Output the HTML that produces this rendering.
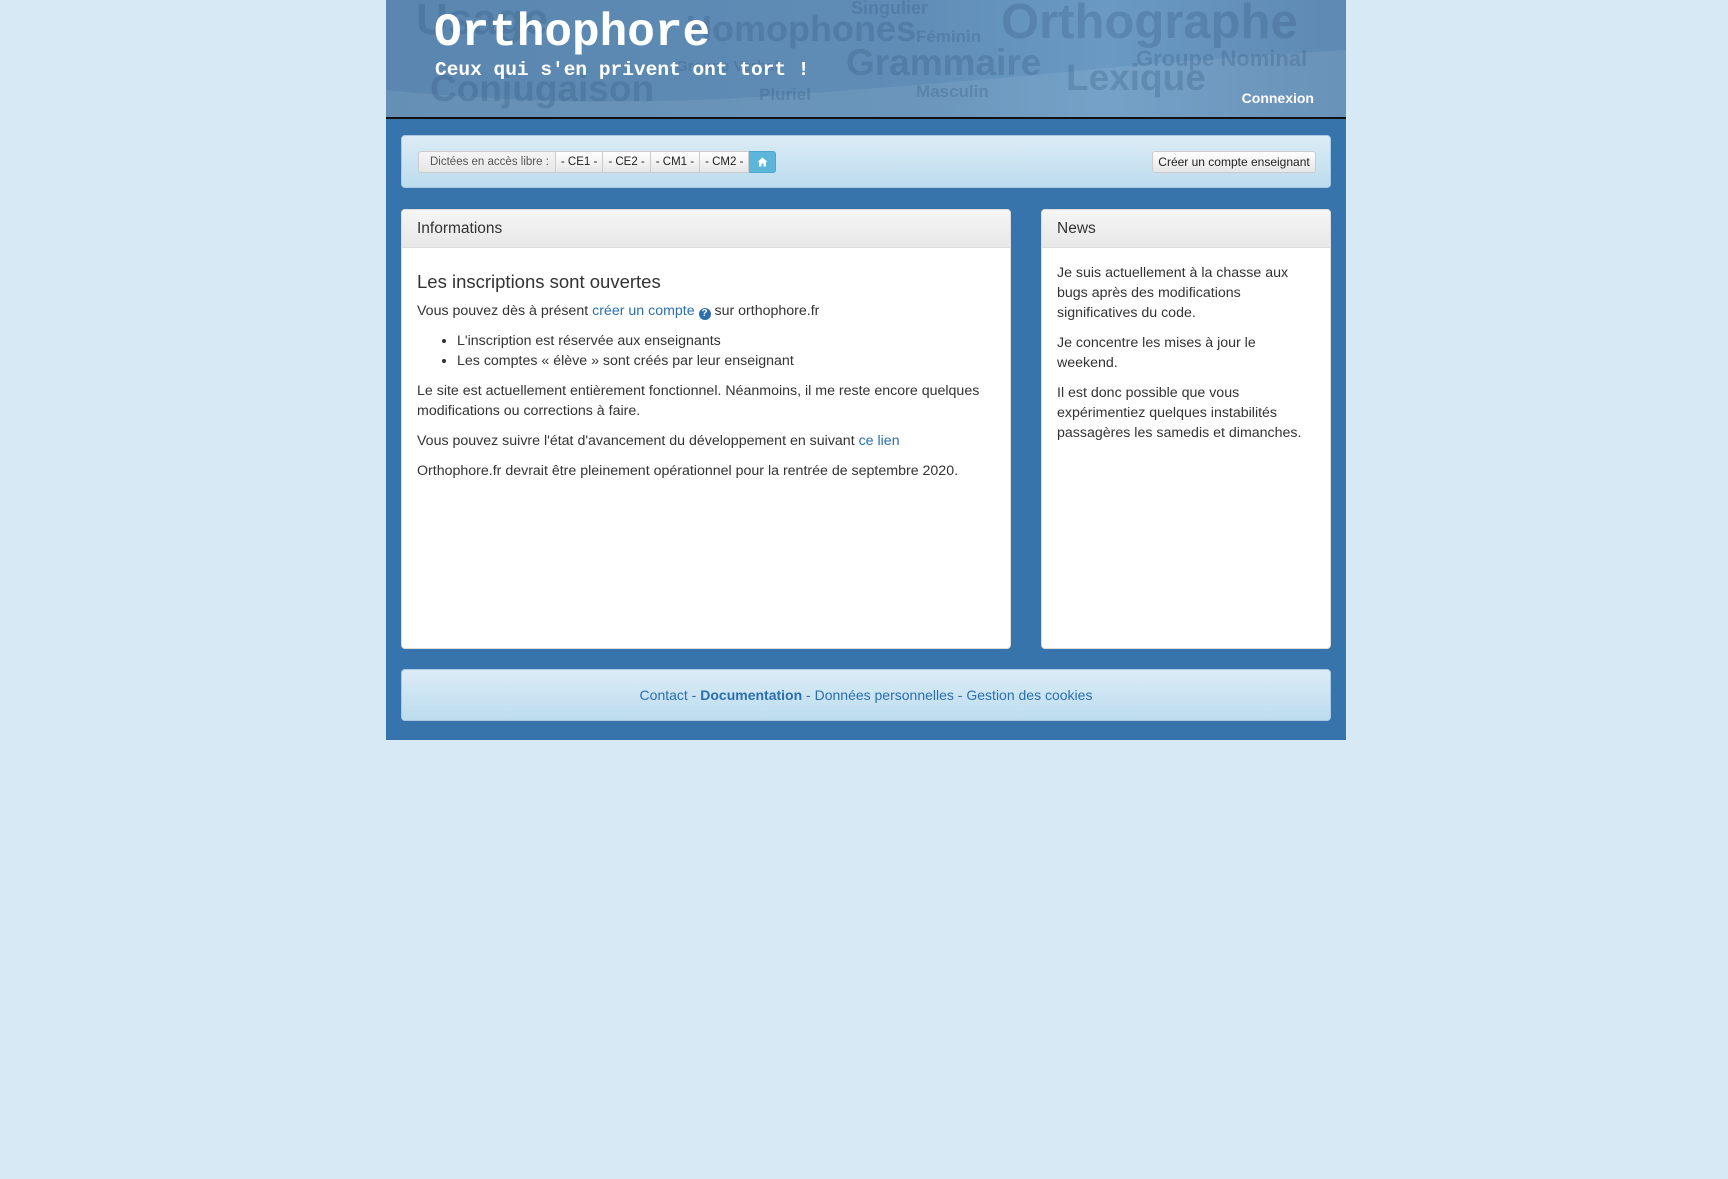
<!DOCTYPE html>
<html><head><meta charset="utf-8"><style>
*{margin:0;padding:0;box-sizing:border-box}
body{width:1728px;height:1179px;background:#d6e9f4;font-family:"Liberation Sans",sans-serif;color:#333;position:relative;overflow:hidden}
.wrap{position:absolute;left:386px;top:0;width:960px;height:740px;background:#3674ab}
.head{position:absolute;left:0;top:0;width:960px;height:119px;background:linear-gradient(90deg,#5a86af 0%,#5f8db6 55%,#6a9ac4 75%,#5d89b2 100%);border-bottom:2px solid #111;overflow:hidden}
.wave{position:absolute;left:0;top:0;width:960px;height:119px}
.w{position:absolute;font-weight:bold;color:rgba(50,85,125,.28);font-family:"Liberation Sans",sans-serif;white-space:nowrap}
.title{position:absolute;left:48px;top:8px;font-family:"Liberation Mono",monospace;font-weight:bold;font-size:46px;line-height:50px;color:#fff}
.sub{position:absolute;left:49px;top:58px;font-family:"Liberation Mono",monospace;font-weight:bold;font-size:19.5px;line-height:24px;color:#fff}
.cx{position:absolute;right:32px;top:90px;color:#fff;font-weight:bold;font-size:14px}
.panel{position:absolute;border-radius:4px;border:1px solid #aac9e0;background:linear-gradient(#dcecf6,#bcdcee)}
.btns{position:absolute;left:16px;top:15px;height:22px;display:flex;font-size:11.5px;border-radius:3px}
.btns span{display:block;height:22px;line-height:20px;border:1px solid #ccc;border-left:none;background:linear-gradient(#fff,#e6e6e6);color:#222;padding:0 5px}
.btns span:first-child{border-left:1px solid #ccc;border-radius:3px 0 0 3px;color:#555;padding:0 6px 0 11px;background:linear-gradient(#f5f5f5,#e6e6e6)}
.btns .home{background:#5bb6da;border-color:#4aa8cf;border-radius:0 3px 3px 0;width:27px;padding:0;display:flex;align-items:center;justify-content:center}
.box{position:absolute;background:#fff;border-radius:4px;border:1px solid #ddd;overflow:hidden}
.box h3{height:38px;background:linear-gradient(#f5f5f5,#e8e8e8);border-bottom:1px solid #ddd;font-weight:normal;font-size:15.5px;line-height:38px;padding-left:15px;color:#333}
.body{padding:0 15px;font-size:14.2px;line-height:20px;color:#333}
.body p{margin-bottom:10px}
a{color:#2a6fb0;text-decoration:none}
</style></head><body>
<div class="wrap">
 <div class="head">
  <svg class="wave" viewBox="0 0 960 119"><path d="M0 90 Q200 110 400 95 T700 70 T960 50 L960 119 L0 119Z" fill="rgba(255,255,255,.08)"/></svg>
  <div class="w" style="left:30px;top:-5px;font-size:44px">Usage</div>
  <div class="w" style="left:300px;top:8px;font-size:36px">Homophones</div>
  <div class="w" style="left:465px;top:-2px;font-size:18px">Singulier</div>
  <div class="w" style="left:530px;top:27px;font-size:17px">Féminin</div>
  <div class="w" style="left:615px;top:-6px;font-size:49px">Orthographe</div>
  <div class="w" style="left:460px;top:42px;font-size:37px">Grammaire</div>
  <div class="w" style="left:750px;top:46px;font-size:22px">Groupe Nominal</div>
  <div class="w" style="left:680px;top:57px;font-size:37px">Lexique</div>
  <div class="w" style="left:44px;top:68px;font-size:37px">Conjugaison</div>
  <div class="w" style="left:373px;top:85px;font-size:17px">Pluriel</div>
  <div class="w" style="left:530px;top:82px;font-size:17px">Masculin</div>
  <div class="w" style="left:290px;top:58px;font-size:15px">Groupe Verbal</div>
  <div class="title">Orthophore</div>
  <div class="sub">Ceux qui s'en privent ont tort !</div>
  <div class="cx">Connexion</div>
 </div>
 <div class="panel" style="left:15px;top:135px;width:930px;height:53px">
  <div class="btns"><span>Dictées en accès libre :</span><span>- CE1 -</span><span>- CE2 -</span><span>- CM1 -</span><span>- CM2 -</span><span class="home"><svg width="11" height="10" viewBox="0 0 11 10"><path d="M5.5 0.5 L0.5 5 L2 5 L2 9.5 L4.5 9.5 L4.5 6.5 L6.5 6.5 L6.5 9.5 L9 9.5 L9 5 L10.5 5Z" fill="#fff"/></svg></span></div>
  <div class="btns" style="left:750px;top:15px"><span style="border-left:1px solid #ccc;border-radius:3px;color:#222;padding:0;background:linear-gradient(#fff,#e6e6e6);width:164px;text-align:center;font-size:12px">Créer un compte enseignant</span></div>
 </div>
 <div class="box" style="left:15px;top:209px;width:610px;height:440px">
  <h3>Informations</h3>
  <div class="body">
   <div style="font-size:18.5px;margin:22px 0 7px;line-height:24px">Les inscriptions sont ouvertes</div>
   <p>Vous pouvez dès à présent <a>créer un compte</a> <span style="display:inline-block;width:12px;height:12px;border-radius:6px;background:#2a6fb0;color:#fff;font-size:10px;line-height:12px;text-align:center;font-weight:bold;vertical-align:-1px">?</span> sur orthophore.fr</p>
   <ul style="padding-left:40px;margin-bottom:10px"><li>L'inscription est réservée aux enseignants</li><li>Les comptes « élève » sont créés par leur enseignant</li></ul>
   <p>Le site est actuellement entièrement fonctionnel. Néanmoins, il me reste encore quelques modifications ou corrections à faire.</p>
   <p>Vous pouvez suivre l'état d'avancement du développement en suivant <a>ce lien</a></p>
   <p>Orthophore.fr devrait être pleinement opérationnel pour la rentrée de septembre 2020.</p>
  </div>
 </div>
 <div class="box" style="left:655px;top:209px;width:290px;height:440px">
  <h3>News</h3>
  <div class="body" style="padding-top:15px;padding-right:28px">
   <p>Je suis actuellement à la chasse aux bugs après des modifications significatives du code.</p>
   <p>Je concentre les mises à jour le weekend.</p>
   <p>Il est donc possible que vous expérimentiez quelques instabilités passagères les samedis et dimanches.</p>
  </div>
 </div>
 <div class="panel" style="left:15px;top:669px;width:930px;height:52px;text-align:center;font-size:14px;line-height:50px;color:#2a6fb0">
  <a>Contact</a> - <a style="font-weight:bold">Documentation</a> - <a>Données personnelles</a> - <a>Gestion des cookies</a>
 </div>
</div>
</body></html>
